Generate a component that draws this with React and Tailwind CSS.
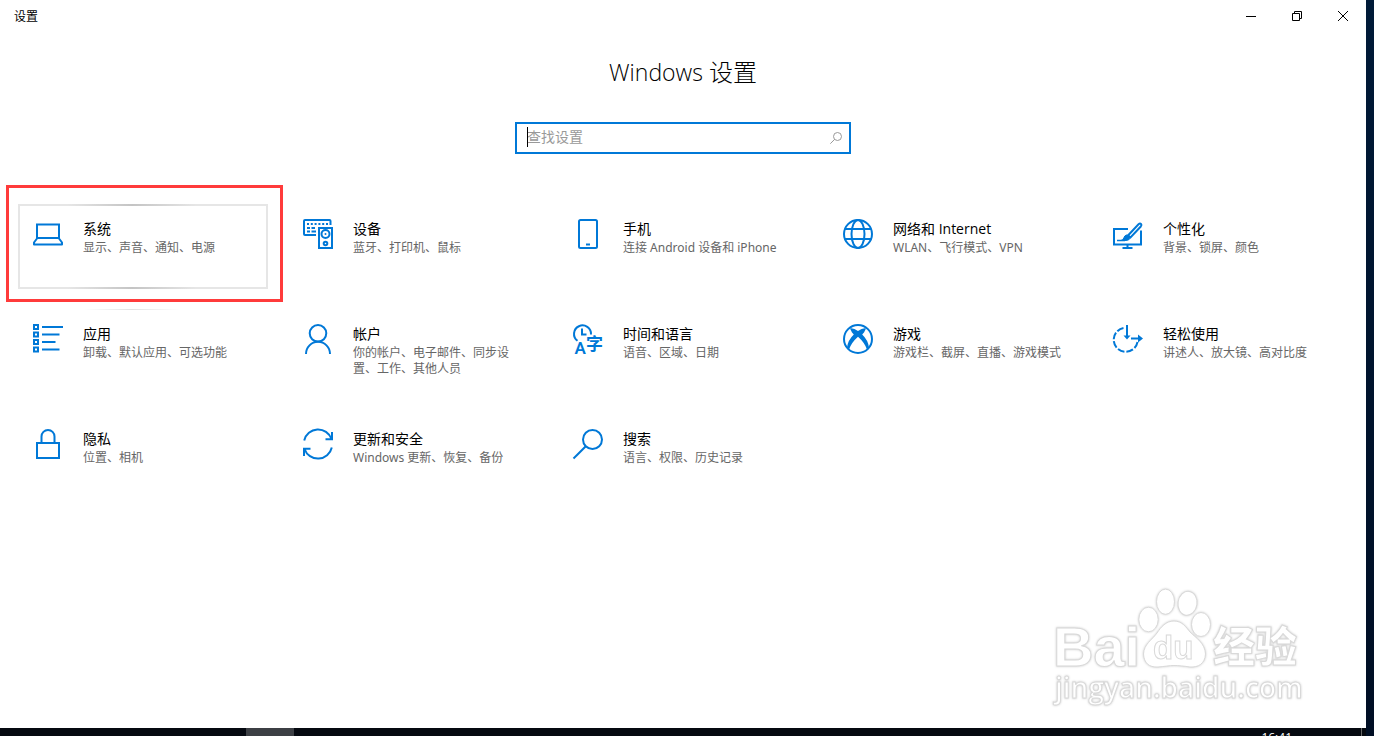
import { useState } from "react";

const stroke = {
  fill: "none",
  stroke: "currentColor",
  strokeWidth: 2,
};

const icons = {
  system: (
    <g {...stroke}>
      <rect x="4" y="5.5" width="22" height="13.5" />
      <path d="M4 19.5L1 23.5V25.5H29V23.5L26 19.5" strokeLinejoin="round" />
    </g>
  ),
  devices: (
    <g {...stroke}>
      <path d="M27.5 6V2Q27.5 1 26.5 1H2Q1 1 1 2V15Q1 16 2 16H13" />
      <path d="M4 5H26" strokeDasharray="2 1.8" />
      <path d="M4 9H7M8.5 9H12" />
      <path d="M4 12.5H7M8.5 12.5H13" />
      <rect x="16" y="9" width="13" height="20" />
      <circle cx="22.5" cy="15" r="4" />
      <circle cx="22.5" cy="15" r="1" fill="currentColor" stroke="none" />
      <circle cx="22.5" cy="24.5" r="1.8" />
    </g>
  ),
  phone: (
    <g {...stroke}>
      <rect x="6" y="1" width="18" height="28" rx="1.5" />
      <path d="M13 25.5H17" />
    </g>
  ),
  network: (
    <g {...stroke}>
      <circle cx="15" cy="15" r="14" />
      <ellipse cx="15" cy="15" rx="6.5" ry="14" />
      <path d="M2 10H28M2 20H28" />
    </g>
  ),
  personalization: (
    <g {...stroke}>
      <path d="M15 10H1V25.5H28V11.5" />
      <path d="M14.5 26V29M9.5 29H19.5" />
      <path d="M15 16.5L25.5 5.3Q27 4 28 5Q29 6 27.8 7.5L17.5 18.5Z" />
      <path
        d="M4.5 21.5H12Q17 21.5 17 18.5Q16.5 15.5 13.5 16Q11.5 16.5 10.8 19Q10 21 8 21.5"
        fill="currentColor"
        strokeWidth="1"
      />
      <path d="M4 21.5H12" strokeWidth="1.5" />
    </g>
  ),
  apps: (
    <g {...stroke}>
      {[1, 8.5, 16, 23.5].map((y) => (
        <rect key={y} x="1" y={y} width="4" height="4" />
      ))}
      <path d="M9 3H30M9 10.5H26.5M9 18H22.5M9 25.5H26.5" />
    </g>
  ),
  accounts: (
    <g {...stroke}>
      <circle cx="15" cy="9.3" r="8.3" />
      <path d="M3 30A12 12.2 0 0 1 27 30" />
    </g>
  ),
  time: (
    <g>
      <path d="M4.5 16.8A8.5 8.5 0 1 1 18 10.5" {...stroke} />
      <path d="M9 4.5V10.5H13.5" {...stroke} />
      <text
        x="1.5"
        y="30"
        fontSize="17"
        fontWeight="600"
        fontFamily="Roboto, sans-serif"
        fill="currentColor"
      >
        A
      </text>
      <text
        x="13"
        y="26"
        fontSize="17"
        fontWeight="600"
        fontFamily="Noto Sans CJK SC, sans-serif"
        fill="currentColor"
      >
        字
      </text>
    </g>
  ),
  gaming: (
    <g>
      <circle cx="15" cy="15" r="14" {...stroke} />
      <path
        d="M7 4.5Q10.5 3.8 15 7Q19.5 3.8 23 4.5L21 8.5Q20 9.3 19.2 10.5Q25 16 26 23.5L24 25.5Q21.5 18.5 15 12.8Q8.500 18.5 6 25.5L4 23.5Q5 16 10.8 10.5Q10 9.3 9 8.5Z"
        fill="currentColor"
      />
    </g>
  ),
  ease: (
    <g {...stroke}>
      <path d="M10.5 4A12 12 0 1 0 24.5 18" strokeDasharray="7 2" />
      <path d="M14 1V14" />
      <path d="M10.5 11.5H17.5L14 15.5Z" fill="currentColor" stroke="none" />
      <path d="M18 14.5H28" />
      <path d="M25 10.5L30 14.5L25 18.5Z" fill="currentColor" stroke="none" />
    </g>
  ),
  privacy: (
    <g {...stroke}>
      <rect x="4" y="14" width="22" height="15" />
      <path d="M8.5 14V7.5A6.5 6.5 0 0 1 21.5 7.5V14" />
    </g>
  ),
  update: (
    <g {...stroke}>
      <path d="M1.2 11.5A14.2 14.2 0 0 1 28.5 10M29 3V10.2H22.5" />
      <path d="M28.8 18.5A14.2 14.2 0 0 1 1.5 20M1 27V19.8H7.5" />
    </g>
  ),
  search: (
    <g {...stroke}>
      <circle cx="19.5" cy="10.5" r="9.5" />
      <path d="M0.5 29.5L12.8 17.2" />
    </g>
  ),
};

const categories = [
  { icon: "system", title: "系统", desc: "显示、声音、通知、电源", active: true },
  { icon: "devices", title: "设备", desc: "蓝牙、打印机、鼠标" },
  { icon: "phone", title: "手机", desc: "连接 Android 设备和 iPhone" },
  { icon: "network", title: "网络和 Internet", desc: "WLAN、飞行模式、VPN" },
  { icon: "personalization", title: "个性化", desc: "背景、锁屏、颜色" },
  { icon: "apps", title: "应用", desc: "卸载、默认应用、可选功能", glow: true },
  {
    icon: "accounts",
    title: "帐户",
    desc: "你的帐户、电子邮件、同步设置、工作、其他人员",
  },
  { icon: "time", title: "时间和语言", desc: "语音、区域、日期" },
  { icon: "gaming", title: "游戏", desc: "游戏栏、截屏、直播、游戏模式" },
  { icon: "ease", title: "轻松使用", desc: "讲述人、放大镜、高对比度" },
  { icon: "privacy", title: "隐私", desc: "位置、相机" },
  { icon: "update", title: "更新和安全", desc: "Windows 更新、恢复、备份" },
  { icon: "search", title: "搜索", desc: "语言、权限、历史记录" },
];

function Tile({ icon, title, desc, active, glow }) {
  return (
    <a
      href="#"
      className={`relative flex h-[85px] gap-5 border-2 px-[13px] pt-[13px] ${
        active ? "border-[#e6e6e6]" : "border-transparent"
      }`}
    >
      <svg
        viewBox="0 0 30 30"
        className="size-[30px] shrink-0 overflow-visible text-[#0078d7]"
        aria-hidden="true"
      >
        {icons[icon]}
      </svg>
      <span className="flex w-[170px] flex-col gap-px">
        <span className="text-sm leading-5 text-black">{title}</span>
        <span className="font-['Noto_Sans','Noto_Sans_CJK_SC',sans-serif] text-xs leading-4 text-[#666]">
          {desc}
        </span>
      </span>
      {active && (
        <>
          <span className="absolute -top-0.5 left-12 h-0.5 w-32 bg-linear-to-r from-[#e6e6e6] via-[#c4c4c4] to-[#e6e6e6]" />
          <span className="absolute -bottom-0.5 left-12 h-0.5 w-32 bg-linear-to-r from-[#e6e6e6] via-[#c4c4c4] to-[#e6e6e6]" />
          <span className="pointer-events-none absolute -top-[21px] -right-[17px] -bottom-[15px] -left-[14px] border-3 border-[#ff3b3b]" />
        </>
      )}
      {glow && (
        <span className="absolute -top-0.5 left-16 h-px w-24 bg-linear-to-r from-white via-[#e2e2e2] to-white" />
      )}
    </a>
  );
}

function TitleBar() {
  return (
    <header className="flex h-8 items-center justify-between pl-3.5">
      <span className="pt-px text-xs text-black">设置</span>
      <div className="flex h-8">
        <button aria-label="最小化" className="grid w-[46px] place-items-center">
          <svg viewBox="0 0 10 10" className="size-2.5" stroke="#000" fill="none">
            <path d="M0 5.5H10" />
          </svg>
        </button>
        <button aria-label="还原" className="grid w-[46px] place-items-center">
          <svg viewBox="0 0 10 10" className="size-2.5" stroke="#000" fill="none">
            <path d="M0.5 2.5H7.5V9.5H0.5ZM2.5 2.5V0.5H9.5V7.5H7.5" />
          </svg>
        </button>
        <button aria-label="关闭" className="grid w-[46px] place-items-center">
          <svg viewBox="0 0 10 10" className="size-2.5" stroke="#000" fill="none">
            <path d="M0 0L10 10M10 0L0 10" />
          </svg>
        </button>
      </div>
    </header>
  );
}

function SearchBox() {
  const [query, setQuery] = useState("");

  return (
    <div className="relative flex h-8 w-[336px] items-center border-2 border-[#0078d7] bg-white pr-[7px] pb-0.5 pl-2.5">
      <input
        type="text"
        aria-label="查找设置"
        placeholder="查找设置"
        value={query}
        onChange={(e) => setQuery(e.target.value)}
        className="min-w-0 flex-1 text-sm leading-5 text-black outline-none placeholder:text-[#999]"
      />
      <span className="absolute top-[3px] left-2.5 h-5 w-px bg-black" />
      <button aria-label="搜索" className="shrink-0 pt-0.5">
        <svg viewBox="0 0 12 12" className="size-3" stroke="#999" fill="none">
          <circle cx="7.5" cy="4.5" r="4" />
          <path d="M0.3 11.7L4.7 7.3" />
        </svg>
      </button>
    </div>
  );
}

function Watermark() {
  return (
    <svg
      viewBox="0 0 270 132"
      className="pointer-events-none absolute right-14 bottom-4 h-[132px] w-[270px] drop-shadow-[0_0_1px_#ccc]"
      fill="#fff"
      stroke="#d9d9d9"
      strokeWidth="1"
    >
      <text x="13" y="86" fontSize="56" fontWeight="700" fontFamily="Liberation Sans, sans-serif">
        Bai
      </text>
      <ellipse cx="108.5" cy="39.5" rx="9.7" ry="12.3" />
      <ellipse cx="125.5" cy="21.7" rx="9" ry="12.6" />
      <ellipse cx="147.5" cy="23.3" rx="9.5" ry="12" transform="rotate(8 147.5 23.3)" />
      <ellipse cx="161" cy="44.5" rx="9.5" ry="12" />
      <path d="M134 41C142 41 146 47 150 52C156 58 165 63 165.5 74C165 84 158 87.5 150 87C143 86 139 85.5 134 85.5C129 85.5 125 86.5 118 87C109 87.5 104 83 103.5 74C104 64 112 60 117 53C121 47 126 41 134 41Z" />
      <text x="113" y="79" fontSize="33" fontWeight="700" fontFamily="Liberation Sans, sans-serif">
        du
      </text>
      <text x="173" y="82" fontSize="42" fontWeight="900" fontFamily="Noto Sans CJK SC, sans-serif">
        经验
      </text>
      <text x="15" y="118" fontSize="28" fontWeight="600" fontFamily="Open Sans, sans-serif">
        jingyan.baidu.com
      </text>
    </svg>
  );
}

export default function App() {
  return (
    <div className="flex min-h-screen flex-col bg-linear-to-b from-[#001a38] to-[#000e24] font-['Open_Sans','Noto_Sans_CJK_SC',sans-serif]">
      <div className="relative mr-2 flex flex-1 flex-col bg-white">
        <TitleBar />
        <main className="flex flex-col items-center">
          <h1 className="mt-6 text-2xl leading-8 font-light text-black">
            <span className="text-[23px]">Windows </span>设置
          </h1>
          <div className="mt-[34px]">
            <SearchBox />
          </div>
          <nav className="mt-[50px] grid w-full grid-cols-[repeat(auto-fill,250px)] gap-5 px-[18px]">
            {categories.map((item) => (
              <Tile key={item.icon} {...item} />
            ))}
          </nav>
        </main>
        <Watermark />
      </div>
      <footer className="mr-2 flex h-2 justify-between overflow-hidden bg-[#050910]">
        <span className="ml-[246px] h-2 w-12 bg-[#3c3f44]" />
        <div className="mr-1 flex h-2">
          <span className="mt-0.5 mr-[69px] text-xs leading-4 text-white">16:41</span>
          <span className="h-2 w-px bg-[#666]" />
        </div>
      </footer>
    </div>
  );
}
